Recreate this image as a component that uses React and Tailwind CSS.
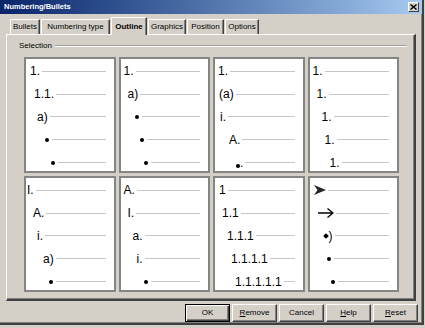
import React from 'react';

const font = { fontFamily: '"Liberation Sans", Arial, sans-serif' };

const tabs = [
  { label: 'Bullets', w: 'w-[30px]' },
  { label: 'Numbering type', w: 'w-[69px]' },
  { label: 'Outline', w: 'w-[36px]', active: true },
  { label: 'Graphics', w: 'w-[38px]' },
  { label: 'Position', w: 'w-[37px]' },
  { label: 'Options', w: 'w-[34px]' },
];

// each preview: five levels, marker + indent
const previews = [
  [
    { t: '1.', pad: 'pl-[4px]' },
    { t: '1.1.', pad: 'pl-[8px]' },
    { t: 'a)', pad: 'pl-[11px]' },
    { k: 'dot', pad: 'pl-[19px]' },
    { k: 'dot', pad: 'pl-[25px]' },
  ],
  [
    { t: '1.', pad: 'pl-[3px]' },
    { t: 'a)', pad: 'pl-[7px]' },
    { k: 'dot', pad: 'pl-[14px]' },
    { k: 'dot', pad: 'pl-[19px]' },
    { k: 'dot', pad: 'pl-[23px]' },
  ],
  [
    { t: '1.', pad: 'pl-[3px]' },
    { t: '(a)', pad: 'pl-[4px]' },
    { t: 'i.', pad: 'pl-[5px]' },
    { t: 'A.', pad: 'pl-[14px]' },
    { k: 'dotPeriod', pad: 'pl-[21px]' },
  ],
  [
    { t: '1.', pad: 'pl-[3px]' },
    { t: '1.', pad: 'pl-[7px]' },
    { t: '1.', pad: 'pl-[12px]' },
    { t: '1.', pad: 'pl-[15px]' },
    { t: '1.', pad: 'pl-[20px]' },
  ],
  [
    { t: 'I.', pad: 'pl-[1px]' },
    { t: 'A.', pad: 'pl-[7px]' },
    { t: 'i.', pad: 'pl-[11px]' },
    { t: 'a)', pad: 'pl-[17px]' },
    { k: 'dot', pad: 'pl-[23px]' },
  ],
  [
    { t: 'A.', pad: 'pl-[3px]' },
    { t: 'I.', pad: 'pl-[7px]' },
    { t: 'a.', pad: 'pl-[12px]' },
    { t: 'i.', pad: 'pl-[16px]' },
    { k: 'dot', pad: 'pl-[23px]' },
  ],
  [
    { t: '1', pad: 'pl-[4px]' },
    { t: '1.1', pad: 'pl-[7px]' },
    { t: '1.1.1', pad: 'pl-[12px]' },
    { t: '1.1.1.1', pad: 'pl-[16px]' },
    { t: '1.1.1.1.1', pad: 'pl-[20px]' },
  ],
  [
    { k: 'arrowhead', pad: 'pl-[4px]' },
    { k: 'arrow', pad: 'pl-[8px]' },
    { k: 'diamond', pad: 'pl-[14px]' },
    { k: 'dot', pad: 'pl-[17px]' },
    { k: 'dot', pad: 'pl-[21px]' },
  ],
];

function Marker({ item }) {
  if (item.k === 'dot') return <span className="w-[4px] h-[4px] rounded-full bg-black mr-[1px]" />;
  if (item.k === 'dotPeriod')
    return (
      <span className="flex items-end">
        <span className="w-[4px] h-[4px] rounded-full bg-black mb-[1px]" />
        <span className="text-[12px] leading-none">.</span>
      </span>
    );
  if (item.k === 'diamond')
    return (
      <span className="flex items-center">
        <span className="w-[4px] h-[4px] bg-black rotate-45 mr-[1px]" />
        <span className="text-[12px] leading-none">)</span>
      </span>
    );
  if (item.k === 'arrowhead')
    return (
      <svg width="12" height="10" viewBox="0 0 12 10">
        <path d="M0 0 L12 5 L0 10 L3.5 5 Z" fill="#262626" />
      </svg>
    );
  if (item.k === 'arrow')
    return (
      <svg width="16" height="10" viewBox="0 0 16 10">
        <path d="M0 5 H15 M9.5 0.5 L15 5 L9.5 9.5" fill="none" stroke="#000" strokeWidth="1.3" />
      </svg>
    );
  return <span className="text-[12px] leading-none text-black">{item.t}</span>;
}

function Preview({ items }) {
  return (
    <div className="h-[116px] bg-white border-2 border-[#858585] pt-[1px] pr-[8px]">
      {items.map((item, i) => (
        <div key={i} className={`flex items-center h-[22.8px] ${item.pad}`}>
          <Marker item={item} />
          <div className="flex-1 h-px bg-[#c6c6c6] ml-[2px]" />
        </div>
      ))}
    </div>
  );
}

function Button({ children, primary }) {
  return (
    <button
      className={`h-[18px] w-[45px] bg-[#d4d0c8] text-[8px] leading-none text-black flex items-center justify-center ${
        primary
          ? 'border border-black shadow-[inset_1px_1px_0_#fff,inset_-1px_-1px_0_#404040,inset_-2px_-2px_0_#808080]'
          : 'border border-white border-r-[#404040] border-b-[#404040] shadow-[inset_-1px_-1px_0_#808080]'
      }`}
    >
      {children}
    </button>
  );
}

export default function App() {
  return (
    <div className="w-[425px] h-[328px] bg-[#d4d0c8] overflow-hidden" style={font}>
      <div className="w-[424px] h-[325px] border-r-2 border-b-2 border-[#404040] shadow-[inset_-1px_-1px_0_#808080]">
        {/* Title bar */}
        <div className="h-[14px] flex items-center justify-between bg-gradient-to-r from-[#0a246a] to-[#a6caf0]">
          <span className="ml-[4px] text-[7.5px] font-bold text-white leading-none">Numbering/Bullets</span>
          <span className="mr-[3px] w-[11px] h-[10px] bg-[#d4d0c8] border border-white border-r-[#404040] border-b-[#404040] flex items-center justify-center">
            <svg width="7" height="6" viewBox="0 0 7 6">
              <path d="M0.5 0.5 L6.5 5.5 M6.5 0.5 L0.5 5.5" stroke="#000" strokeWidth="1.4" />
            </svg>
          </span>
        </div>

        {/* Tabs */}
        <div className="relative z-10 flex items-end gap-px h-[16px] mt-[4px] ml-[10px]">
          {tabs.map(tab => (
            <div
              key={tab.label}
              className={`${tab.w} flex items-center justify-center text-[8px] leading-none text-black border-t border-l border-white border-r border-r-[#404040] shadow-[inset_-1px_0_0_#808080] ${
                tab.active ? 'h-[18px] -mb-px bg-[#d4d0c8] font-bold' : 'h-[15px]'
              }`}
            >
              {tab.label}
            </div>
          ))}
        </div>

        {/* Tab page */}
        <div className="ml-[6px] w-[410px] border-t border-l border-white border-r-2 border-b-2 border-r-[#404040] border-b-[#404040] shadow-[inset_-1px_-1px_0_#808080] pb-[7px]">
          <div className="flex items-center h-[10px] mt-[6px] pl-[12px] pr-[7px]">
            <span className="text-[8px] leading-none text-black">Selection</span>
            <div className="flex-1 h-[2px] ml-[3px] border-t border-[#a0a0a0] border-b border-b-white" />
          </div>
          <div className="grid grid-cols-4 gap-[3px] w-[375px] ml-[17px] mt-[6px]">
            {previews.map((items, i) => (
              <Preview key={i} items={items} />
            ))}
          </div>
        </div>

        {/* Buttons */}
        <div className="flex justify-end gap-[2px] mt-[3px] pr-[4px]">
          <Button primary>OK</Button>
          <Button>
            <span className="underline">R</span>emove
          </Button>
          <Button>Cancel</Button>
          <Button>
            <span className="underline">H</span>elp
          </Button>
          <Button>
            <span className="underline">R</span>eset
          </Button>
        </div>
      </div>
    </div>
  );
}
